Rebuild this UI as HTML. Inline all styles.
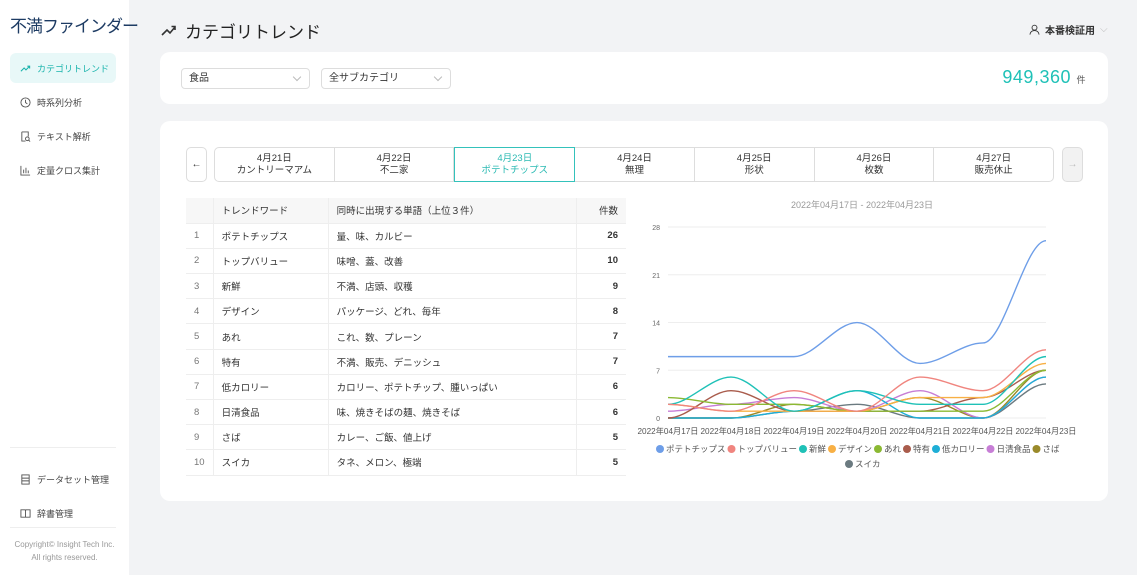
<!DOCTYPE html>
<html><head><meta charset="utf-8"><style>
*{box-sizing:border-box;margin:0;padding:0}
body{width:1137px;height:575px;overflow:hidden;background:#f2f3f5;font-family:"Liberation Sans","Noto Sans CJK JP",sans-serif;color:#333;position:relative}
.side{position:absolute;left:0;top:0;width:129px;height:575px;background:#fff}
.logo{position:absolute;left:10px;top:12px;font-size:17px;color:#1d3b63;letter-spacing:-1px;white-space:nowrap}
.nav{position:absolute;left:10px;width:106px;height:30px;font-size:9px;color:#444;display:flex;align-items:center;padding-left:10px;gap:6px;white-space:nowrap}
.nav.act{background:#e8f8f8;color:#19b3ac;border-radius:6px}
.ic{width:11px;height:11px;display:inline-block;flex:none}
.hr{position:absolute;left:10px;width:106px;border-top:1px solid #eee}
.copy{position:absolute;left:0;width:129px;text-align:center;font-size:8px;color:#999;line-height:13px}
.card{position:absolute;background:#fff;border-radius:10px}
.sel{position:absolute;top:16px;height:21px;border:1px solid #ddd;border-radius:4px;font-size:10px;line-height:19px;padding:0 7px;color:#333}
.sel:after{content:"";position:absolute;right:9px;top:5px;width:5px;height:5px;border-right:1px solid #bbb;border-bottom:1px solid #bbb;transform:rotate(45deg)}
.tabs{position:absolute;left:214px;top:147px;width:840px;height:35px;border:1px solid #ddd;border-radius:5px;display:flex;background:#fff}
.tab{flex:1;border-right:1px solid #ddd;text-align:center;font-size:9.5px;line-height:12px;padding-top:5px;color:#333}
.tab:last-child{border-right:none}
.tab.act{border:1px solid #34c2bb;color:#2bbab3;margin:-1px 0}
.arr{position:absolute;top:147px;width:21px;height:35px;border:1px solid #ddd;border-radius:5px;font-size:10px;text-align:center;line-height:33px}
table{position:absolute;left:186px;top:198px;width:440px;border-collapse:collapse;font-size:9.5px}
td{height:25.2px;border-bottom:1px solid #eee;padding:0 8px;white-space:nowrap}
tr:first-child td{background:#f7f7f7}
td:nth-child(1){width:27px;color:#777;border-right:1px solid #eee}
td:nth-child(2){width:115px;border-right:1px solid #eee}
td:nth-child(3){width:248px;border-right:1px solid #eee}
td:nth-child(4){text-align:right;font-weight:bold}
tr:first-child td:nth-child(4){font-weight:normal}
</style></head><body>
<div class="side">
<div class="logo">不満ファインダー</div>
<div class="nav act" style="top:53px"><svg class="ic" viewBox="0 0 12 12"><path d="M1 9L4.5 5.5 6.5 7.5 10.5 3.5M8 3.5h2.5V6" fill="none" stroke="#19b3ac" stroke-width="1.2"/></svg>カテゴリトレンド</div>
<div class="nav" style="top:87px"><svg class="ic" viewBox="0 0 12 12"><circle cx="6" cy="6" r="5" fill="none" stroke="#555"/><path d="M6 3v3l2 1.5" fill="none" stroke="#555"/></svg>時系列分析</div>
<div class="nav" style="top:121px"><svg class="ic" viewBox="0 0 12 12"><path d="M2 1h7v5M2 1v10h4" fill="none" stroke="#555"/><circle cx="8" cy="8.5" r="2" fill="none" stroke="#555"/><path d="M9.5 10l1.5 1.5" stroke="#555"/></svg>テキスト解析</div>
<div class="nav" style="top:155px"><svg class="ic" viewBox="0 0 12 12"><path d="M1 1v10h10M4 9V5M6.5 9V3M9 9V6" fill="none" stroke="#555"/></svg>定量クロス集計</div>
<div class="hr" style="top:447px"></div>
<div class="nav" style="top:464px"><svg class="ic" viewBox="0 0 12 12"><rect x="2" y="1" width="8" height="10" fill="none" stroke="#555"/><path d="M2 4.5h8M2 7.5h8" stroke="#555"/></svg>データセット管理</div>
<div class="nav" style="top:498px"><svg class="ic" viewBox="0 0 12 12"><path d="M1 2h4.5l.5 1 .5-1H11v8H1z M6 3v7" fill="none" stroke="#555"/></svg>辞書管理</div>
<div class="hr" style="top:527px"></div>
<div class="copy" style="top:538px">Copyright© Insight Tech Inc.<br>All rights reserved.</div>
</div>
<svg style="position:absolute;left:161px;top:22px" width="16" height="16" viewBox="0 0 16 16"><path d="M1 13L6 8l3 3 5-6M10.5 4.5H14V8" fill="none" stroke="#333" stroke-width="1.6"/></svg>
<div style="position:absolute;left:185px;top:18px;font-size:17px;color:#222">カテゴリトレンド</div>
<div style="position:absolute;left:1029px;top:22px;font-size:10px;font-weight:bold;color:#333;display:flex;gap:5px;align-items:center"><svg width="11" height="11" viewBox="0 0 12 12"><circle cx="6" cy="4" r="2.7" fill="none" stroke="#333"/><path d="M1 11.5c.5-3 2.5-4.3 5-4.3s4.5 1.3 5 4.3" fill="none" stroke="#333"/></svg>本番検証用 <span style="color:#bbb;font-weight:normal">⌵</span></div>
<div class="card" style="left:160px;top:52px;width:948px;height:52px">
<div class="sel" style="left:21px;width:129px">食品</div>
<div class="sel" style="left:161px;width:130px">全サブカテゴリ</div>
<div style="position:absolute;right:22px;top:15px;color:#1fc1b7;font-size:18px;letter-spacing:0.5px">949,360 <span style="font-size:9px;color:#555">件</span></div>
</div>
<div class="card" style="left:160px;top:121px;width:948px;height:380px"></div>
<div class="arr" style="left:186px;background:#fff">←</div>
<div class="arr" style="left:1062px;background:#f2f2f2;color:#bbb">→</div>
<div class="tabs">
<div class="tab">4月21日<br>カントリーマアム</div>
<div class="tab">4月22日<br>不二家</div>
<div class="tab act">4月23日<br>ポテトチップス</div>
<div class="tab">4月24日<br>無理</div>
<div class="tab">4月25日<br>形状</div>
<div class="tab">4月26日<br>枚数</div>
<div class="tab">4月27日<br>販売休止</div>
</div>
<table>
<tr><td></td><td>トレンドワード</td><td>同時に出現する単語（上位３件）</td><td>件数</td></tr>
<tr><td>1</td><td>ポテトチップス</td><td>量、味、カルビー</td><td>26</td></tr>
<tr><td>2</td><td>トップバリュー</td><td>味噌、蓋、改善</td><td>10</td></tr>
<tr><td>3</td><td>新鮮</td><td>不満、店頭、収穫</td><td>9</td></tr>
<tr><td>4</td><td>デザイン</td><td>パッケージ、どれ、毎年</td><td>8</td></tr>
<tr><td>5</td><td>あれ</td><td>これ、数、プレーン</td><td>7</td></tr>
<tr><td>6</td><td>特有</td><td>不満、販売、デニッシュ</td><td>7</td></tr>
<tr><td>7</td><td>低カロリー</td><td>カロリー、ポテトチップ、腫いっぱい</td><td>6</td></tr>
<tr><td>8</td><td>日清食品</td><td>味、焼きそばの麺、焼きそば</td><td>6</td></tr>
<tr><td>9</td><td>さば</td><td>カレー、ご飯、値上げ</td><td>5</td></tr>
<tr><td>10</td><td>スイカ</td><td>タネ、メロン、極端</td><td>5</td></tr>
</table>
<svg id="ch" style="position:absolute;left:630px;top:190px" width="480" height="290" font-family="Liberation Sans,Noto Sans CJK JP,sans-serif">
<text x="232" y="18" font-size="9" fill="#999" text-anchor="middle">2022年04月17日 - 2022年04月23日</text>
</svg>
<script>
var s=document.getElementById('ch'),NS='http://www.w3.org/2000/svg';
function el(t,a,txt){var e=document.createElementNS(NS,t);for(var k in a)e.setAttribute(k,a[k]);if(txt)e.textContent=txt;s.appendChild(e);return e}
var X=i=>38+i*63,Y=v=>228-v*6.82;
[0,7,14,21,28].forEach(v=>{el('line',{x1:38,x2:416,y1:Y(v),y2:Y(v),stroke:'#eee'});el('text',{x:30,y:Y(v)+3,'font-size':7,fill:'#666','text-anchor':'end'},''+v)});
for(var i=0;i<7;i++)el('text',{x:X(i),y:244,'font-size':8.6,fill:'#555','text-anchor':'middle',textLength:61,lengthAdjust:'spacingAndGlyphs'},'2022年04月'+(17+i)+'日');
var D=[['ポテトチップス','#6e9ee8',[9,9,9,14,8,11,26]],['トップバリュー','#f0857f',[2,1,4,1,6,4,10]],['新鮮','#1fc1b7',[2,6,1,4,2,2,9]],['デザイン','#f8b045',[2,1,1,1,3,3,8]],['あれ','#8bb933',[3,2,2,1,1,1,7]],['特有','#a95c4c',[0,4,1,1,1,3,7]],['低カロリー','#1eaed6',[0,0,1,4,0,0,6]],['日清食品','#c77ed6',[1,2,3,1,4,0,6]],['さば','#9a8a2a',[0,0,2,1,3,0,7]],['スイカ','#6b7a80',[0,0,1,2,0,0,5]]];
D.slice().reverse().forEach(d=>{var p=d[2].map((v,i)=>[X(i),Y(v)]),str='M'+p[0];for(var i=0;i<6;i++){var a=p[i],b=p[i+1];str+='C'+(a[0]+21)+','+a[1]+' '+(b[0]-21)+','+b[1]+' '+b[0]+','+b[1]}el('path',{d:str,fill:'none',stroke:d[1],'stroke-width':1.4})});
var lx=30;D.forEach((d,i)=>{var x=i<9?lx:219,y=i<9?262:277;el('circle',{cx:x,cy:y-3,r:4,fill:d[1]});el('text',{x:x+6,y:y,'font-size':8.5,fill:'#555'},d[0]);if(i<9)lx+=12+d[0].length*8.5});
</script>
</body></html>
